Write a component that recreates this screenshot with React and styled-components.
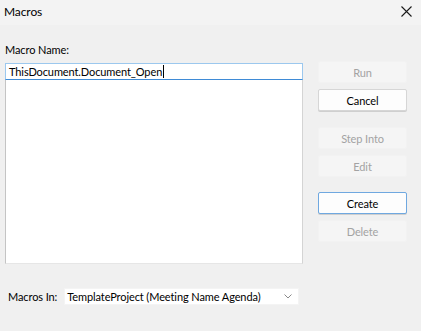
import React from "react";
import styled, { createGlobalStyle } from "styled-components";

const GlobalStyle = createGlobalStyle`
  html, body {
    margin: 0;
    padding: 0;
    background: #f0f0f0;
  }
  body {
    font-family: "Segoe UI", Lato, "Noto Sans", sans-serif;
    font-size: 11px;
    letter-spacing: -0.1px;
    color: #000;
  }
`;

const Window = styled.div`
  width: 421px;
  height: 331px;
  display: flex;
  flex-direction: column;
  background: #f0f0f0;
  overflow: hidden;
`;

const TitleBar = styled.div`
  height: 25px;
  flex: none;
  display: flex;
  align-items: center;
  justify-content: space-between;
  padding: 0 8px 2px 4px;
  background: #f3f3f3;
  box-sizing: border-box;
`;

const Title = styled.span`
  font-size: 12px;
  line-height: 16px;
`;

const CloseButton = styled.button`
  width: 14px;
  height: 14px;
  padding: 0;
  border: 0;
  background: transparent;
  display: flex;
  align-items: center;
  justify-content: center;
`;

const Body = styled.div`
  display: flex;
  padding-left: 5px;
`;

const LeftCol = styled.div`
  width: 298px;
  display: flex;
  flex-direction: column;
  padding-top: 17px;
`;

const Label = styled.label`
  line-height: 16px;
  height: 16px;
  white-space: nowrap;
`;

const ListBox = styled.div`
  margin-top: 5px;
  height: 201px;
  background: #fff;
  border-left: 1px solid #c4c4c4;
  border-right: 1px solid #d4d4d4;
  border-bottom: 1px solid #e6e6e6;
  box-sizing: border-box;
  display: flex;
  flex-direction: column;
`;

const NameInput = styled.div`
  height: 17px;
  margin: 0 -1px;
  box-sizing: border-box;
  border: 1px solid #9cc8ee;
  border-bottom-color: #3f8bd6;
  background: #fff;
  padding-left: 3px;
  line-height: 15px;
  display: flex;
  align-items: center;
  white-space: nowrap;
`;

const Caret = styled.span`
  display: inline-block;
  width: 1px;
  height: 13px;
  background: #000;
  margin-left: 1px;
`;

const ButtonCol = styled.div`
  margin-left: 15px;
  width: 89px;
  padding-top: 36px;
  display: flex;
  flex-direction: column;
`;

const Button = styled.button`
  height: 22px;
  width: 89px;
  margin-top: ${(p) => p.$gap ?? 6}px;
  box-sizing: border-box;
  font: inherit;
  letter-spacing: inherit;
  padding: 0;
  border-radius: 2px;
  color: ${(p) => (p.disabled ? "#a3a3a3" : "#000")};
  background: ${(p) => (p.disabled ? "#f5f5f5" : "#fdfdfd")};
  border: 1px solid
    ${(p) => (p.disabled ? "#f2f2f2" : p.$focused ? "#6fa8e0" : "#d6d6d6")};
  box-shadow: ${(p) => (p.disabled ? "none" : "0 1px 0 #cfcfcf")};
`;

const Footer = styled.div`
  display: flex;
  align-items: center;
  padding: 24px 0 0 8px;
`;

const Select = styled.div`
  margin-left: 7px;
  width: 235px;
  height: 17px;
  box-sizing: border-box;
  background: #fff;
  border: 1px solid #f4f4f4;
  display: flex;
  align-items: center;
  justify-content: space-between;
  padding: 0 6px 0 2px;
  white-space: nowrap;
`;

export default function App() {
  return (
    <Window>
      <GlobalStyle />
      <TitleBar>
        <Title>Macros</Title>
        <CloseButton aria-label="Close">
          <svg width="11" height="11" viewBox="0 0 11 11">
            <path d="M0.5 0.5 L10.5 10.5 M10.5 0.5 L0.5 10.5" stroke="#1a1a1a" strokeWidth="1.1" />
          </svg>
        </CloseButton>
      </TitleBar>
      <Body>
        <LeftCol>
          <Label>Macro Name:</Label>
          <ListBox>
            <NameInput>
              ThisDocument.Document_Open
              <Caret />
            </NameInput>
          </ListBox>
        </LeftCol>
        <ButtonCol>
          <Button disabled $gap={0}>Run</Button>
          <Button>Cancel</Button>
          <Button disabled $gap={16}>Step Into</Button>
          <Button disabled>Edit</Button>
          <Button $focused $gap={15}>Create</Button>
          <Button disabled>Delete</Button>
        </ButtonCol>
      </Body>
      <Footer>
        <Label>Macros In:</Label>
        <Select>
          <span>TemplateProject (Meeting Name Agenda)</span>
          <svg width="8" height="5" viewBox="0 0 8 5">
            <path d="M0.5 0.5 L4 4 L7.5 0.5" stroke="#8a8a8a" strokeWidth="1" fill="none" />
          </svg>
        </Select>
      </Footer>
    </Window>
  );
}
